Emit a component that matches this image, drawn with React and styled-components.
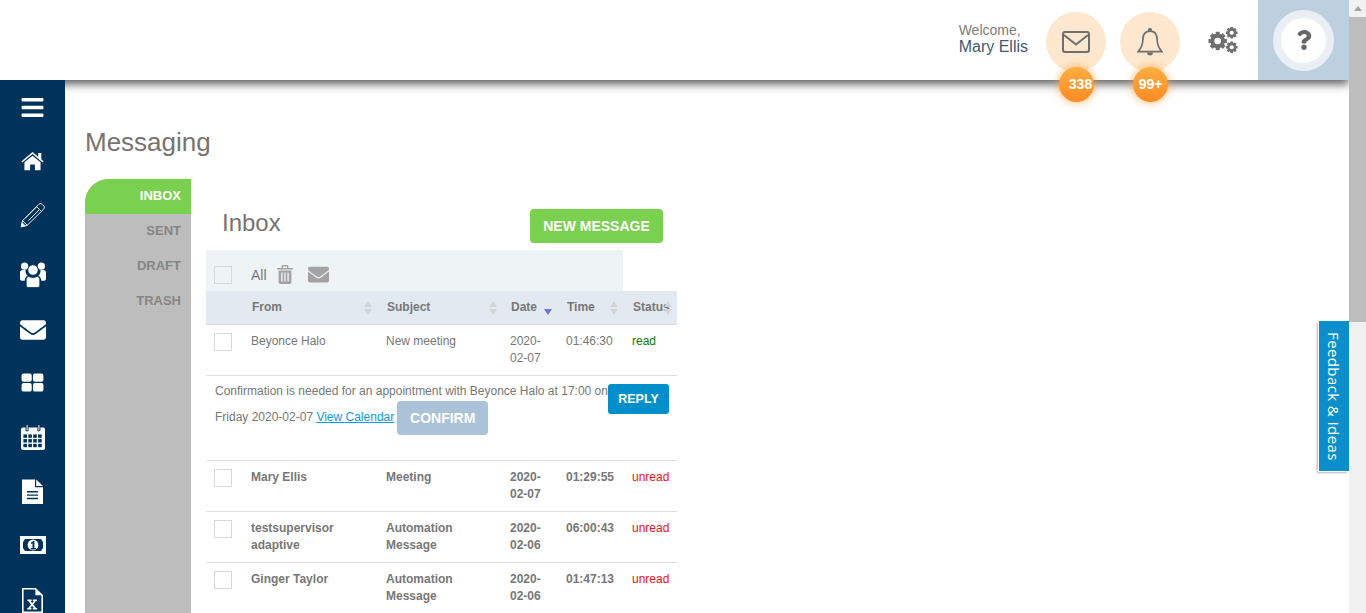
import React from "react";
import styled, { createGlobalStyle } from "styled-components";
import { FaBars, FaEnvelope, FaQuestion } from "react-icons/fa";

const GlobalStyle = createGlobalStyle`
  html, body {
    margin: 0;
    padding: 0;
    height: 100%;
    overflow: hidden;
    background: #fff;
    font-family: "Liberation Sans", Arial, sans-serif;
    color: #777;
  }
`;

const Page = styled.div`
  display: flex;
  height: 100vh;
  overflow: hidden;
`;

const Viewport = styled.div`
  position: relative;
  flex: 1;
  min-width: 0;
  display: flex;
  flex-direction: column;
`;

const Header = styled.header`
  position: relative;
  z-index: 2;
  flex: 0 0 80px;
  display: flex;
  justify-content: flex-end;
  align-items: stretch;
  background: #fff;
  box-shadow: 0 4px 9px rgba(0, 0, 0, 0.65);
`;

const Welcome = styled.div`
  align-self: center;
  margin-right: 18px;
  margin-top: -3px;
  font-size: 14px;
  line-height: 15px;
  color: #7d7d7d;
`;

const UserName = styled.div`
  font-size: 16px;
  line-height: 17px;
  color: #3f5a70;
`;

const RoundButton = styled.div`
  position: relative;
  width: 60px;
  height: 60px;
  margin: 12px 14px 0 0;
  border-radius: 50%;
  background: #fde8cf;
  display: flex;
  align-items: center;
  justify-content: center;
`;

const Badge = styled.span`
  position: absolute;
  left: 13px;
  top: 55px;
  width: 35px;
  height: 35px;
  box-sizing: border-box;
  padding-left: ${(p) => p.$shift || 0}px;
  border-radius: 50%;
  background: linear-gradient(#ffad42, #ff8a24);
  box-shadow: 0 0 10px rgba(255, 160, 60, 0.8);
  color: #fff;
  font-size: 14px;
  font-weight: 700;
  line-height: 35px;
  text-align: center;
  white-space: nowrap;
`;

const Settings = styled.div`
  width: 30px;
  margin: 0 20px 0 14px;
  display: flex;
  align-items: center;
  justify-content: center;
`;

const HelpPanel = styled.div`
  width: 91px;
  background: #bdd0e0;
  display: flex;
  align-items: center;
  justify-content: center;
`;

const HelpRing = styled.div`
  width: 45px;
  height: 45px;
  border: 8px solid #e9eff5;
  border-radius: 50%;
  background: #fff;
  color: #666;
  font-size: 20px;
  display: flex;
  align-items: center;
  justify-content: center;
`;

const Body = styled.div`
  flex: 1;
  min-height: 0;
  display: flex;
`;

const Sidebar = styled.nav`
  position: relative;
  z-index: 3;
  flex: 0 0 65px;
  display: flex;
  flex-direction: column;
  align-items: center;
  background: #00335b;
  color: #fff;
`;

const NavItem = styled.div`
  flex: 0 0 ${(p) => p.$h}px;
  display: flex;
  align-items: center;
  justify-content: center;
  font-size: ${(p) => p.$size || 25}px;
`;

const Content = styled.main`
  flex: 1;
  min-width: 0;
  padding-left: 20px;
`;

const PageTitle = styled.h1`
  margin: 0;
  padding-top: 46px;
  height: 53px;
  font-size: 26px;
  font-weight: 400;
  line-height: 32px;
  color: #77736f;
`;

const Columns = styled.div`
  display: flex;
  height: 434px;
`;

const Tabs = styled.ul`
  flex: 0 0 106px;
  margin: 0;
  padding: 0;
  list-style: none;
  background: #bdbdbd;
  border-top-left-radius: 24px;
`;

const Tab = styled.li`
  height: 35px;
  padding-right: 10px;
  font-size: 13px;
  font-weight: 700;
  line-height: 34px;
  text-align: right;
  color: ${(p) => (p.$active ? "#fff" : "#858585")};
  background: ${(p) => (p.$active ? "#7ad04f" : "transparent")};
  border-top-left-radius: ${(p) => (p.$active ? "24px" : "0")};
`;

const Panel = styled.section`
  flex: 0 0 471px;
  margin-left: 15px;
  padding-top: 30px;
`;

const PanelHead = styled.div`
  height: 41px;
  display: flex;
  align-items: flex-start;
  justify-content: space-between;
  padding: 0 14px 0 16px;
`;

const PanelTitle = styled.h2`
  margin: 0;
  font-size: 24px;
  font-weight: 400;
  line-height: 28px;
  color: #77736f;
`;

const GreenButton = styled.button`
  width: 133px;
  height: 34px;
  border: 0;
  border-radius: 4px;
  background: #7ad04f;
  color: #fff;
  font: 700 14px "Liberation Sans", Arial, sans-serif;
`;

const Toolbar = styled.div`
  width: 417px;
  height: 41px;
  box-sizing: border-box;
  display: flex;
  align-items: center;
  padding: 8px 0 0 8px;
  background: #eef3f6;
  color: #777;
  font-size: 14px;
`;

const CheckBox = styled.span`
  display: block;
  width: 18px;
  height: 18px;
  box-sizing: border-box;
  border: 1px solid #d9d9d9;
  background: ${(p) => (p.$muted ? "transparent" : "#fff")};
`;

const ToolbarLabel = styled.span`
  margin-left: 19px;
`;

const ToolIcon = styled.span`
  display: flex;
  margin-left: ${(p) => p.$gap}px;
  color: #a3a3a3;
  font-size: ${(p) => p.$size}px;
`;

const Row = styled.div`
  display: grid;
  grid-template-columns: 45px 135px 124px 56px 66px 45px;
  height: ${(p) => p.$h || 50}px;
  box-sizing: content-box;
  border-bottom: 1px solid #dedede;
  font-size: 12px;
  line-height: 17px;
  font-weight: ${(p) => (p.$bold ? 700 : 400)};
`;

const HeadRow = styled(Row)`
  background: #e3e9f0;
  font-weight: 700;
  align-items: center;
  border-bottom-color: #d5dae0;
  height: 33px;
`;

const HeadCell = styled.div`
  position: relative;
  padding-left: 1px;
`;

const SortArrows = styled.span`
  position: absolute;
  right: ${(p) => p.$right}px;
  top: 1px;
  width: 8px;
  height: 15px;
  &::before,
  &::after {
    content: "";
    position: absolute;
    left: 0;
    border-left: 4px solid transparent;
    border-right: 4px solid transparent;
  }
  &::before {
    top: 1px;
    border-bottom: 6px solid ${(p) => (p.$active ? "transparent" : "#d2d5d8")};
  }
  &::after {
    top: 9px;
    border-top: 6px solid ${(p) => (p.$active ? "#6a78d8" : "#d2d5d8")};
  }
`;

const Cell = styled.div`
  padding: 8px 14px 0 0;
  color: ${(p) => p.$color || "#777"};
  font-weight: ${(p) => (p.$color ? 400 : "inherit")};
`;

const CheckCell = styled.div`
  padding: 8px 0 0 8px;
`;

const Detail = styled.div`
  height: 84px;
  box-sizing: content-box;
  padding: 0 8px 0 9px;
  border-bottom: 1px solid #dedede;
  font-size: 12px;
  line-height: 20px;
  color: #777;
`;

const ReplyButton = styled.button`
  float: right;
  width: 61px;
  height: 30px;
  margin-top: 8px;
  padding: 0;
  border: 0;
  border-radius: 3px;
  background: #008fcb;
  color: #fff;
  font: 700 12.5px "Liberation Sans", Arial, sans-serif;
`;

const DetailText = styled.div`
  padding-top: 5px;
`;

const CalendarLink = styled.a`
  color: #0a9bdc;
  text-decoration: underline;
`;

const ConfirmButton = styled.button`
  width: 91px;
  height: 34px;
  margin-left: 3px;
  border: 0;
  border-radius: 4px;
  background: #abc3d8;
  color: #fff;
  font: 700 14px "Liberation Sans", Arial, sans-serif;
  vertical-align: middle;
`;

const FeedbackTab = styled.div`
  position: absolute;
  right: 0;
  top: 321px;
  z-index: 4;
  width: 30px;
  height: 150px;
  box-sizing: border-box;
  display: flex;
  align-items: center;
  justify-content: center;
  background: #0b8fcb;
  box-shadow: -1px 1px 0 #fff, -2px 2px 2px rgba(0, 0, 0, 0.3);
  color: #fff;
  font-family: "Open Sans", sans-serif;
  font-size: 15px;
  letter-spacing: 0.4px;
  writing-mode: vertical-rl;
`;

const ScrollTrack = styled.div`
  flex: 0 0 17px;
  background: #f1f1f1;
  position: relative;
  z-index: 5;
`;

const ScrollArrow = styled.div`
  height: 17px;
  display: flex;
  justify-content: center;
  padding-top: 6px;
  box-sizing: border-box;
  &::before {
    content: "";
    border-left: 4px solid transparent;
    border-right: 4px solid transparent;
    border-bottom: 5px solid #a3a3a3;
    height: 0;
  }
`;

const ScrollThumb = styled.div`
  height: 305px;
  background: #bdbdbd;
`;

const MailOutline = () => (
  <svg width="28" height="22" viewBox="0 0 28 22" fill="none" stroke="#6f6f6f" strokeWidth="2">
    <rect x="1" y="1" width="26" height="20" rx="2" />
    <path d="M2 4l12 9.5L26 4" />
  </svg>
);

const BellOutline = () => (
  <svg width="26" height="28" viewBox="0 0 26 28" fill="none" stroke="#6f6f6f" strokeWidth="1.7">
    <circle cx="13" cy="2" r="1.2" fill="#6f6f6f" />
    <path d="M13 3.2C7.6 3.2 5.8 7 5.8 12c0 5-1.5 8-4.6 11.6h23.6C21.7 20 20.2 17 20.2 12c0-5-1.8-8.8-7.2-8.8z" />
    <path d="M10 24.5a3 3 0 0 0 6 0z" fill="#6f6f6f" stroke="none" />
  </svg>
);

const Gear = ({ cx, cy, r }) => (
  <g>
    <circle cx={cx} cy={cy} r={r * 0.58} fill="none" stroke="#6f6f6f" strokeWidth={r * 0.44} />
    {[0, 45, 90, 135, 180, 225, 270, 315].map((a) => (
      <rect
        key={a}
        x={cx - r * 0.22}
        y={cy - r}
        width={r * 0.44}
        height={r * 0.4}
        fill="#6f6f6f"
        transform={`rotate(${a} ${cx} ${cy})`}
      />
    ))}
  </g>
);

const CogsIcon = () => (
  <svg width="31" height="28" viewBox="0 0 31 28">
    <Gear cx={10} cy={15} r={9.5} />
    <Gear cx={24.5} cy={6.5} r={6} />
    <Gear cx={24.5} cy={21.5} r={6} />
  </svg>
);

const TrashIcon = () => (
  <svg width="16" height="19" viewBox="0 0 16 19" fill="#a3a3a3">
    <path d="M0 3h4.6V1.4C4.6.6 5.2 0 6 0h4c.8 0 1.4.6 1.4 1.4V3H16v1.6H0zM6 3h4V1.4H6z" fillRule="evenodd" />
    <path
      fillRule="evenodd"
      d="M1.6 5.4h12.8v11.8c0 1-.8 1.8-1.8 1.8H3.4c-1 0-1.8-.8-1.8-1.8zM4.2 7.4v9h1.4v-9zM7.3 7.4v9h1.4v-9zM10.4 7.4v9h1.4v-9z"
    />
  </svg>
);

const HomeIcon = () => (
  <svg width="23" height="20" viewBox="0 0 24 20" fill="#fff">
    <path d="M0.4 10.4 12 0.6 18 5.6V1.6h3.2v6.7l2.4 2.1-1 1.2L12 2.7 1.4 11.6z" />
    <path d="M3.6 11.4 12 4.4l8.4 7v8.2h-5.9v-6h-5v6H3.6z" />
  </svg>
);

const PencilIcon = () => (
  <svg width="26" height="26" viewBox="0 0 26 26" fill="none" stroke="#e8eef3" strokeWidth="1">
    <path d="M7 23.5 1.2 24.8l1.3-6L18.8 2.4c1-1 2.4-1 3.3-.1l1.6 1.6c.9.9.9 2.3-.1 3.3z" />
    <path d="M2.6 18.6 7.2 23.3M16.6 4.6l4.7 4.7M5.6 15.8l11-11M8.4 18.6l11-11" />
    <path d="M1.2 24.8l1-4 3 3z" fill="#e8eef3" />
  </svg>
);

const UsersIcon = () => (
  <svg width="26" height="26" viewBox="0 0 26 26" fill="#fff">
    <circle cx="4.6" cy="4.2" r="3.6" />
    <circle cx="21.4" cy="4.2" r="3.6" />
    <path d="M0 10.5c0-1.5 1-2.4 2.4-2.4h3.2c-.4 2.6.5 4.4 2 5.6-1.8 1-2.7 2.5-2.9 5H2c-1.2 0-2-.8-2-2z" />
    <path d="M26 10.5c0-1.5-1-2.4-2.4-2.4h-3.2c.4 2.6-.5 4.4-2 5.6 1.8 1 2.7 2.5 2.9 5H24c1.2 0 2-.8 2-2z" />
    <circle cx="13" cy="8" r="5.2" stroke="#00335b" strokeWidth="0.8" />
    <path
      d="M8.6 14.2c2.6 1.6 6.2 1.6 8.8 0 1.4.6 2.4 1.9 2.4 3.6v5.4c0 1.3-1 2.3-2.3 2.3H8.5c-1.3 0-2.3-1-2.3-2.3v-5.4c0-1.7 1-3 2.4-3.6z"
      stroke="#00335b"
      strokeWidth="0.8"
    />
  </svg>
);

const TilesIcon = () => (
  <svg width="23" height="19" viewBox="0 0 24 20" fill="#fff">
    <rect x="0.5" y="0.5" width="10.7" height="8.7" rx="2" />
    <rect x="12.5" y="0.5" width="11" height="8.7" rx="2" />
    <rect x="0.5" y="10.5" width="10.7" height="9" rx="2" />
    <rect x="12.5" y="10.5" width="11" height="9" rx="2" />
  </svg>
);

const calendarCells = [];
for (let r = 0; r < 3; r++) {
  for (let c = 0; c < 4; c++) {
    calendarCells.push(<rect key={`${r}-${c}`} x={2.4 + c * 4.9} y={9.4 + r * 4.7} width="3.6" height="3.4" />);
  }
}

const CalendarIcon = () => (
  <svg width="24" height="25" viewBox="0 0 24 25" fill="#fff">
    <path d="M2 2.6h2.6V5.2c0 1.6 3 1.6 3 0V2.6h8.8V5.2c0 1.6 3 1.6 3 0V2.6H22c1.1 0 2 .9 2 2V23c0 1.1-.9 2-2 2H2c-1.1 0-2-.9-2-2V4.6c0-1.1.9-2 2-2z" />
    <rect x="5.6" y="0" width="1" height="5.6" rx="0.5" />
    <rect x="17.4" y="0" width="1" height="5.6" rx="0.5" />
    <g fill="#00335b">{calendarCells}</g>
  </svg>
);

const DocIcon = () => (
  <svg width="21" height="25" viewBox="0 0 21 25" fill="#fff">
    <path d="M0 .6h13v7.6h8V25H0z" />
    <path d="M14.2.6 21 7H14.2z" />
    <path d="M5 12h11v1.4H5zM5 15.4h11v1.4H5zM5 18.8h11v1.4H5z" fill="#00335b" />
  </svg>
);

const MoneyIcon = () => (
  <svg width="26" height="18" viewBox="0 0 26 18" fill="#fff">
    <path fillRule="evenodd" d="M0 0h26v18H0zM5 3 3 6v6l2 3h16l2-3V6l-2-3z" />
    <circle cx="13" cy="9" r="5.4" />
    <path d="M11 6.6 13.4 5h1v7h1.4v1.4h-5V12h1.7V7.2l-1.5.8z" fill="#00335b" />
  </svg>
);

const ExcelIcon = () => (
  <svg width="21" height="25" viewBox="0 0 21 25">
    <path d="M.8.8h12.6l6.8 6.6v16.8H.8z" fill="#00335b" stroke="#fff" strokeWidth="1.6" />
    <path d="M13.4.8 20 7.2h-6.6z" fill="#fff" />
    <path d="M5.4 11.6h4.2v1.3H8.7l1.5 2.3 1.5-2.3h-.9v-1.3h4.1v1.3h-1l-2.6 3.5 2.8 3.7h1v1.3h-4.3v-1.3h.9l-1.6-2.4-1.6 2.4h.9v1.3H5.2v-1.3h1l2.8-3.7-2.6-3.5h-1z" fill="#fff" />
  </svg>
);

const navItems = [
  { h: 54, icon: <FaBars />, size: 25 },
  { h: 54, icon: <HomeIcon /> },
  { h: 54, icon: <PencilIcon /> },
  { h: 66, icon: <UsersIcon /> },
  { h: 44, icon: <FaEnvelope />, size: 26 },
  { h: 60, icon: <TilesIcon /> },
  { h: 50, icon: <CalendarIcon /> },
  { h: 58, icon: <DocIcon /> },
  { h: 50, icon: <MoneyIcon /> },
  { h: 60, icon: <ExcelIcon /> },
];

const messages = [
  { from: "Mary Ellis", subject: "Meeting", date: "2020-02-07", time: "01:29:55" },
  { from: "testsupervisor adaptive", subject: "Automation Message", date: "2020-02-06", time: "06:00:43" },
  { from: "Ginger Taylor", subject: "Automation Message", date: "2020-02-06", time: "01:47:13" },
];

function App() {
  return (
    <Page>
      <GlobalStyle />
      <Viewport>
        <Header>
          <Welcome>
            Welcome,
            <UserName>Mary Ellis</UserName>
          </Welcome>
          <RoundButton>
            <MailOutline />
            <Badge $shift={8}>338</Badge>
          </RoundButton>
          <RoundButton>
            <BellOutline />
            <Badge>99+</Badge>
          </RoundButton>
          <Settings>
            <CogsIcon />
          </Settings>
          <HelpPanel>
            <HelpRing>
              <FaQuestion />
            </HelpRing>
          </HelpPanel>
        </Header>
        <Body>
          <Sidebar>
            {navItems.map((item, i) => (
              <NavItem key={i} $h={item.h} $size={item.size}>
                {item.icon}
              </NavItem>
            ))}
          </Sidebar>
          <Content>
            <PageTitle>Messaging</PageTitle>
            <Columns>
              <Tabs>
                <Tab $active>INBOX</Tab>
                <Tab>SENT</Tab>
                <Tab>DRAFT</Tab>
                <Tab>TRASH</Tab>
              </Tabs>
              <Panel>
                <PanelHead>
                  <PanelTitle>Inbox</PanelTitle>
                  <GreenButton>NEW MESSAGE</GreenButton>
                </PanelHead>
                <Toolbar>
                  <CheckBox $muted />
                  <ToolbarLabel>All</ToolbarLabel>
                  <ToolIcon $gap={10}>
                    <TrashIcon />
                  </ToolIcon>
                  <ToolIcon $gap={15} $size={21}>
                    <FaEnvelope />
                  </ToolIcon>
                </Toolbar>
                <HeadRow>
                  <div />
                  <HeadCell>
                    From
                    <SortArrows $right={14} />
                  </HeadCell>
                  <HeadCell>
                    Subject
                    <SortArrows $right={13} />
                  </HeadCell>
                  <HeadCell>
                    Date
                    <SortArrows $right={14} $active />
                  </HeadCell>
                  <HeadCell>
                    Time
                    <SortArrows $right={14} />
                  </HeadCell>
                  <HeadCell>
                    Status
                    <SortArrows $right={5} />
                  </HeadCell>
                </HeadRow>
                <Row>
                  <CheckCell>
                    <CheckBox />
                  </CheckCell>
                  <Cell>Beyonce Halo</Cell>
                  <Cell>New meeting</Cell>
                  <Cell>2020-02-07</Cell>
                  <Cell>01:46:30</Cell>
                  <Cell $color="#0a7d0a">read</Cell>
                </Row>
                <Detail>
                  <ReplyButton>REPLY</ReplyButton>
                  <DetailText>
                    Confirmation is needed for an appointment with Beyonce Halo at 17:00 on Friday 2020-02-07{" "}
                    <CalendarLink href="#">View Calendar</CalendarLink>
                    <ConfirmButton>CONFIRM</ConfirmButton>
                  </DetailText>
                </Detail>
                {messages.map((m) => (
                  <Row key={m.time} $bold>
                    <CheckCell>
                      <CheckBox />
                    </CheckCell>
                    <Cell>{m.from}</Cell>
                    <Cell>{m.subject}</Cell>
                    <Cell>{m.date}</Cell>
                    <Cell>{m.time}</Cell>
                    <Cell $color="#f01020">unread</Cell>
                  </Row>
                ))}
              </Panel>
            </Columns>
          </Content>
        </Body>
        <FeedbackTab>Feedback &amp; Ideas</FeedbackTab>
      </Viewport>
      <ScrollTrack>
        <ScrollArrow />
        <ScrollThumb />
      </ScrollTrack>
    </Page>
  );
}

export default App;
